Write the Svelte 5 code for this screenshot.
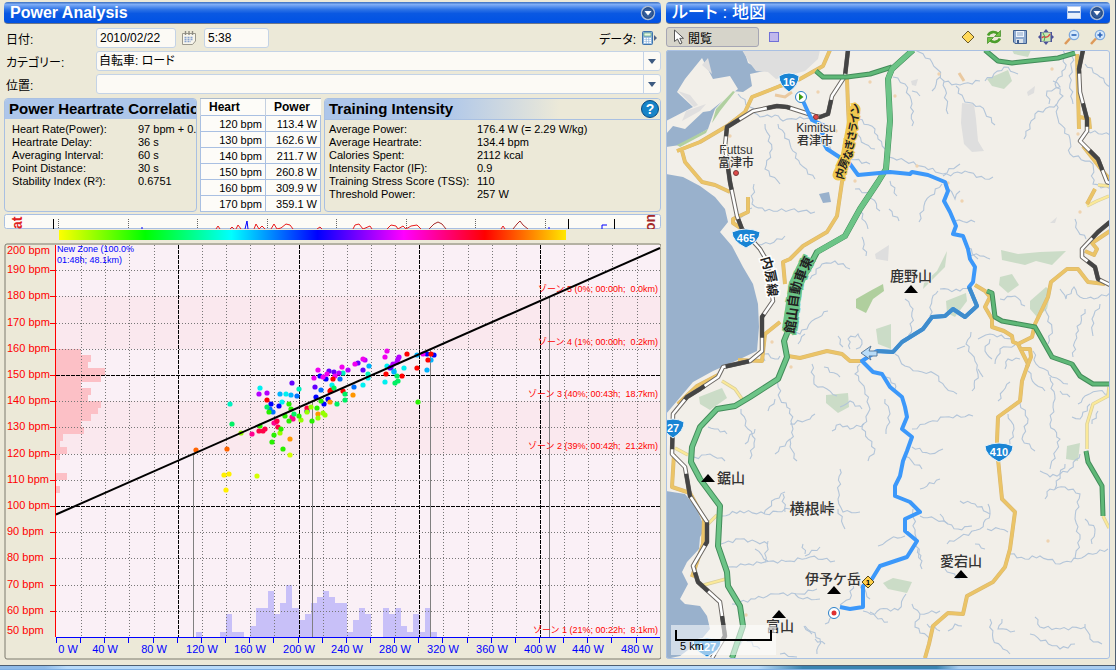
<script>
    let date = $state('2010/02/22');
    let time = $state('5:38');

    const correlation = [
        ['Heart Rate(Power):', '97 bpm + 0.2'],
        ['Heartrate Delay:', '36 s'],
        ['Averaging Interval:', '60 s'],
        ['Point Distance:', '30 s'],
        ['Stability Index (R²):', '0.6751']
    ];

    const intensity = [
        ['Average Power:', '176.4 W (= 2.29 W/kg)'],
        ['Average Heartrate:', '134.4 bpm'],
        ['Calories Spent:', '2112 kcal'],
        ['Intensity Factor (IF):', '0.9'],
        ['Training Stress Score (TSS):', '110'],
        ['Threshold Power:', '257 W']
    ];

    const heartPower = [
        [120, '113.4'], [130, '162.6'], [140, '211.7'],
        [150, '260.8'], [160, '309.9'], [170, '359.1']
    ];

    // chart scales
    const px = (w) => Math.round(57 + w * 1.2075);
    const py = (b) => Math.round(506 - (b - 100) * 2.62);
    const range = (from, to, step) => {
        const out = [];
        for (let i = from; i <= to; i += step) out.push(i);
        return out;
    };

    const bpmTicks = range(60, 190, 10);
    const wattTicks = range(0, 480, 20);
    const wattLabels = range(40, 480, 40);
    const stripTicks = [58, 128, 197, 267, 336, 406, 475, 545];

    const bpmBars = [25, 35, 32, 49, 45, 25, 35, 32, 45, 42, 35, 25, 28, 7, 4, 11, 4, 0, 0, 11, 0, 4];
    // one bar per 5 W, first one at 115 W
    const wattBars = [
        5, 0, 0, 0, 5, 23, 5, 5, 0, 11, 29, 29, 46, 23, 34, 52, 29, 17, 23, 34,
        40, 46, 40, 34, 34, 5, 17, 29, 23, 0, 0, 29, 23, 29, 11, 5, 23, 5, 29, 5
    ];

    const zones = [
        ['ゾーン 5 (0%; 00:00h;\u00a0 0.0km)', 292],
        ['ゾーン 4 (1%; 00:00h;\u00a0 0.2km)', 345],
        ['ゾーン 3 (40%; 00:43h;\u00a0 18.7km)', 397],
        ['ゾーン 2 (39%; 00:42h;\u00a0 21.2km)', 449],
        ['ゾーン 1 (21%; 00:22h;\u00a0 8.1km)', 633]
    ];

    const dots = {
        '#00f0f0': [[260,388],[286,394],[282,402],[332,385],[404,368],[387,366],[385,382],[368,378],[363,385]],
        '#00f0c0': [[230,404],[299,389],[368,374],[343,373],[394,371]],
        '#00b4ff': [[280,394],[291,395],[417,355],[431,360],[427,370],[369,366],[394,372]],
        '#0070ff': [[270,409],[273,412],[297,396],[321,390],[354,387],[340,379]],
        '#0000ff': [[271,404],[279,406],[316,397],[320,376],[326,379],[328,399],[324,404],[427,354],[434,355],[307,411]],
        '#6400ff': [[292,383],[315,387],[329,371],[334,372],[390,368],[358,363],[363,370],[391,367]],
        '#b400ff': [[259,394],[267,393],[398,359],[397,362],[393,364],[365,360],[348,370],[339,373],[399,357]],
        '#f000f0': [[318,370],[314,378],[323,377],[327,374],[335,376],[387,351],[385,357],[423,354],[363,359],[355,364],[342,367]],
        '#ff0090': [[274,423],[293,419],[292,417],[252,434],[276,422]],
        '#ff0048': [[277,421],[278,427],[265,429],[259,431],[263,431],[307,408]],
        '#ff0000': [[267,400],[333,379],[330,391],[407,354],[431,354],[428,360],[417,368],[402,376],[386,374],[343,391],[331,390]],
        '#ff6400': [[196,450],[227,449]],
        '#ff9600': [[290,439],[330,402],[318,414],[353,395]],
        '#fff000': [[224,475],[229,474],[226,490]],
        '#d2ff00': [[257,476],[290,455]],
        '#96ff00': [[301,420],[280,433],[241,433],[311,407],[323,413],[325,415],[318,418],[307,412]],
        '#28f000': [[269,412],[289,404],[291,409],[299,416],[285,416],[289,421],[281,429],[274,435],[260,426],[272,442],[283,449],[312,421],[317,408],[418,402],[321,401]],
        '#00f064': [[232,424],[267,407],[334,388],[337,404],[397,376],[398,381],[395,383],[345,394],[345,400],[294,414]]
    };

    // map layers
    const rail = [
        'M848,51L845,77 832,97 828,115 820,118 815,117 787,108 777,107 753,112 727,128 725,147 730,183 737,217 742,230 760,250 767,262 773,302 762,318 762,352 750,362 723,368 718,378 700,390 687,398 673,415 672,455 685,468 690,497 707,523 707,543 693,567 698,583 720,603 725,637 712,659',
        'M1083,51L1079,70 1080,93 1087,120 1087,132 1080,142 1098,160 1107,183 1110,184',
        'M1110,223L1098,233 1082,250 1082,258 1095,268 1098,280 1110,286'
    ];
    const orange = [
        'M830,51L823,67 800,80 780,87 770,91 752,98 745,113 727,127 700,143 677,152',
        'M682,152L685,163 702,183 715,186 730,193',
        'M847,80L848,107 850,150 842,183 837,217 827,233 803,247 790,260 783,263 785,285',
        'M748,198L748,213 733,220 733,224 742,230',
        'M788,357L800,359 827,352 842,355 850,362 862,362',
        'M780,323L765,335 762,362 738,361M718,376L697,387 678,405 M674,455L672,488 690,494 704,520 703,545 692,578',
        'M975,286L985,292 990,298 985,308 992,320 992,328 1004,332 1012,337 1013,343 1018,345 1028,365 1022,382 1020,402 998,418 997,442 998,460 1002,500 1015,513 1010,550 1005,568 993,583 967,597 963,615 948,614 933,627 929,645 925,659',
        'M1018,345L1032,338 1035,325 1048,298 1051,283 1067,270 1078,270 1088,283 1105,285',
        'M1020,350L1030,350 1031,358 1027,368',
        'M1077,55L1079,130M1080,118L1089,120 1090,130M1083,147L1105,175 1110,180M1095,190L1087,205',
        'M1110,232L1092,244 1097,250 1094,256 1085,252'
    ];
    const yellow = [
        'M1087,207L1097,202 1109,197M1098,186L1110,187',
        'M1109,388L1108,397 1093,405 1087,425 1087,450M1103,517L1109,529',
        'M722,382L735,390 742,400M675,449L688,456M717,516L707,526M700,587L726,580'
    ];
    const green = [
        'M913,51L892,70 888,80 890,122 886,170 878,183 860,210 845,237 817,253 807,272 793,292 788,332 784,342 787,358 778,380 750,398 735,407 717,410 700,428 692,448 691,463 700,480 720,507 718,547 727,573 728,587 740,607 743,627 732,659'
    ];
    const thinGreen = [
        'M816,72L823,78 847,78 870,75 892,68',
        'M985,51L998,62 1012,64 1058,59 1075,54',
        'M987,292L992,294 995,318 1002,322 1035,328 1052,358 1072,365 1080,377 1093,385 1110,385',
        'M1086,452L1088,463 1102,487 1103,517'
    ];
    const route = 'M803,102L808,113 812,121 827,128 820,138 827,150 850,165 858,176 890,173 910,175 912,173 928,176 945,183 948,192 944,202 950,213 956,227 953,235 963,237 968,250 970,260 975,268 973,283 969,288 977,307 965,318 953,310 945,317 932,318 923,330 902,343 893,353 877,352 862,362 873,373 882,375 890,388 902,398 905,408 907,418 902,430 912,438 907,452 903,462 900,477 895,487 895,497 910,503 920,513 905,520 905,532 917,542 907,558 880,567 872,580 863,587 863,608 850,610 840,608';
    const parks = [
        '987,80 1008,71 1012,82 1004,90 992,87', '1012,51 1031,51 1028,58 1014,55',
        '856,300 870,292 883,285 884,292 873,300 866,314 856,309', '876,330 891,325 891,350 878,345',
        '1001,251 1018,255 1040,253 1066,252 1052,266 1036,262 1025,266 1002,261', '946,302 966,294 967,302 955,318 947,314',
        '1000,278 1012,275 1019,286 1008,294 999,286', '1030,302 1046,288 1051,292 1047,310 1037,318 1030,310',
        '699,398 722,389 727,399 710,411 700,405', '826,396 848,394 849,408 838,414 826,404',
        '883,584 893,579 912,583 907,594 888,590', '1067,447 1080,444 1078,462 1066,460', '923,290 945,268 947,252 937,272 924,284'
    ];
    const towns = [
        '742,51 820,51 818,60 805,72 776,80 768,73 756,72 749,63', '962,104 974,105 976,120 978,142 984,152 972,153 964,145 961,124',
        '1027,93 1035,87 1034,94 1028,97', '911,82 918,80 916,87 912,86', '875,255 889,246 888,262 876,260', '1050,224 1057,218 1055,224'
    ];
    const hamlets = [[730,137],[818,93],[855,182],[772,343],[939,75],[895,97],[917,167],[948,184],[962,202],[1078,135],[1080,213],[1052,70],[870,83],[746,616],[1048,542],[791,368],[836,132]];

    const rivers = [
        [738,95,750,108,760,118,775,116,783,122,800,118,812,120], [765,125,772,150,765,170,780,185], [778,125,790,145,800,165,815,180],
        [754,185,752,205,765,212,790,211,815,213], [738,220,752,209], [749,245,770,245,785,237], [858,120,875,130,878,140,885,150],
        [848,125,865,145,875,150], [820,140,835,155,870,165], [855,190,870,195,880,212], [860,212,868,230], [810,280,822,265,835,262,850,270],
        [915,51,930,60,937,70,944,82,948,115], [944,83,960,86,980,82], [956,87,965,103,980,107,995,126], [893,78,905,85,912,105,912,127],
        [912,92,920,97], [932,92,940,78], [985,82,1004,68,1018,75], [1063,51,1065,70,1055,85,1063,97,1057,105,1035,115,1024,140],
        [1056,105,1058,120,1070,140], [1049,105,1047,92,1060,88,1053,82], [1085,65,1100,78,1110,88], [1070,140,1070,155,1093,165,1093,185,1110,190],
        [1073,53,1070,85,1073,105], [1087,132,1110,136], [889,158,905,162,925,168,943,175,960,165], [943,177,965,172,985,180,993,178],
        [942,185,925,203,919,223], [949,190,955,200,960,192], [955,222,975,223], [965,245,978,260], [968,255,980,257,990,260],
        [862,238,866,257], [1075,220,1078,232,1086,240], [890,182,897,197], [889,210,899,222],
        [1060,290,1066,300,1074,288,1080,298,1094,300,1110,294], [1045,310,1052,330,1048,345], [1085,310,1076,335,1073,358],
        [1100,305,1092,320,1093,337], [930,317,932,300,938,292], [910,340,913,310,905,300], [895,355,905,367,918,372,935,375,945,388,957,395],
        [1000,300,1015,297,1025,307], [940,290,960,292,970,288], [1012,340,990,335,978,340], [1015,346,1000,350,995,365],
        [971,333,966,345,975,362,978,375,972,392], [978,370,983,378], [990,340,985,352,992,360], [965,347,957,350], [1020,360,1008,360,1005,370],
        [1033,352,1036,365,1048,372,1052,378,1068,385], [1050,378,1055,400,1050,425,1060,440,1050,470], [1028,372,1035,385,1045,392],
        [1010,383,1003,392,998,402], [1020,404,1028,420,1022,440,1035,452], [1008,415,1014,430,1010,445],
        [1109,395,1098,392,1085,397,1078,405], [1090,405,1080,420,1072,418], [1098,412,1092,425], [1080,455,1070,470,1060,475],
        [1040,472,1050,478,1060,475], [1060,392,1070,398], [886,378,895,385,895,390], [912,430,925,425,945,418,973,417],
        [885,400,890,415,886,435], [912,448,930,455,943,450], [905,457,922,470], [860,365,855,375,864,387,870,410,862,430,875,450,868,462],
        [812,365,814,385,827,390,837,397], [824,368,840,378], [788,330,800,335,815,320,828,312], [798,345,805,335], [850,350,848,340,858,335,862,345,856,350],
        [843,348,838,337], [778,380,780,400,790,410,793,430,790,448,797,462], [741,410,748,430,755,440,750,460], [755,430,745,445],
        [690,460,710,455,725,462], [708,428,718,430,727,435], [790,425,810,420,815,415], [775,400,768,412], [790,440,775,455],
        [862,410,850,402,840,408], [864,425,850,430,840,425,832,432], [765,362,760,352,775,360,780,357], [722,517,740,512,765,515,790,510,830,512],
        [764,515,775,500,785,493], [785,513,783,495], [840,470,838,500,843,513,860,513], [838,510,845,530], [721,545,740,540,768,545],
        [728,568,745,566,765,563,768,542], [755,550,768,562], [765,563,790,562,810,558,835,562], [805,557,820,548], [732,605,755,600,775,595,800,595,817,590],
        [795,595,803,600,820,600], [805,555,803,545], [878,547,890,540,905,537], [920,517,935,520,948,525,958,530,972,527], [948,525,940,515],
        [947,545,960,538,980,530,990,515,988,505], [990,515,975,505,960,502], [987,530,1000,530,1008,533], [960,580,945,570], [985,550,975,545],
        [920,490,940,480], [1045,500,1050,490,1065,488,1080,495,1075,520,1080,540,1075,560], [1010,555,1025,560,1040,557,1060,565,1085,557,1108,550],
        [1085,520,1095,530,1092,545], [1065,465,1060,475,1055,490], [913,510,915,535,922,570], [920,560,918,550], [805,627,820,640,817,655],
        [815,640,825,645], [804,627,812,635], [863,612,875,615,880,610,898,611,906,595], [870,613,878,620,888,623], [825,625,835,615],
        [912,605,920,615,940,612], [920,615,915,628,930,640], [927,625,940,632], [990,620,993,640,1003,650,1010,655],
        [1002,620,998,630,1015,632], [1035,618,1040,628,1060,630,1085,628], [1085,625,1090,640,1102,645], [1030,635,1060,650,1075,645],
        [733,650,745,640,760,650], [948,632,955,625,962,627], [860,585,870,600], [853,585,850,600,840,606], [780,655,797,658]
    ];

    // breaks every stretch into short crooked pieces
    function crooked(p) {
        let d = `M${p[0]},${p[1]}`;
        for (let i = 2; i < p.length; i += 2) {
            const dx = p[i] - p[i - 2];
            const dy = p[i + 1] - p[i - 1];
            const len = Math.hypot(dx, dy);
            const n = Math.max(2, Math.round(len / 4));
            for (let k = 1; k < n; k++) {
                const off = Math.sin(k * 2.3 + p[i] * 1.7 + p[i + 1]) * 1.6;
                const x = p[i - 2] + (dx * k) / n - (dy / len) * off;
                const y = p[i - 1] + (dy * k) / n + (dx / len) * off;
                d += `L${x.toFixed(1)},${y.toFixed(1)}`;
            }
            d += `L${p[i]},${p[i + 1]}`;
        }
        return d;
    }

    const shields = [['16', 789, 83, 10], ['465', 746, 239, 14], ['410', 999, 453, 14], ['27', 673, 429, 11], ['127', 707, 648, 14]];
    const peaks = [[911, 290], [708, 479], [834, 591], [961, 575], [779, 615]];
    const places = [
        ['Kimitsu', 816, 133, 12], ['君津市', 815, 146, 12], ['Futtsu', 736, 155, 12], ['富津市', 736, 168, 12],
        ['鹿野山', 911, 282, 14], ['鋸山', 731, 484, 14], ['横根峠', 812, 515, 15], ['伊予ケ岳', 833, 585, 14],
        ['愛宕山', 961, 567, 14], ['富山', 780, 632, 14]
    ];
</script>

{#snippet menuButton(label)}
    <button class="round" aria-label={label}>
        <svg width="16" height="16" viewBox="0 0 16 16">
            <circle cx="8" cy="8" r="6.5" fill="#315c9c" stroke="#a9bad2" stroke-width="1.5" />
            <circle cx="8" cy="8" r="5.2" fill="none" stroke="#244a82" />
            <path d="M4.5,6H11.5L8,10.5Z" fill="#fff" />
        </svg>
    </button>
{/snippet}

<div class="app">
    <main>
        <section class="analysis">
            <header class="title">
                <h1>Power Analysis</h1>
                {@render menuButton('Panel menu')}
            </header>

            <form>
                <label for="date">日付:</label>
                <div class="line">
                    <input id="date" class="date" type="text" bind:value={date} />
                    <button type="button" aria-label="Calendar">
                        <svg width="16" height="16" viewBox="0 0 16 16">
                            <path d="M1.5,3.5H14.5V11L11.5,14.5H1.5Z" fill="#f7f5ec" stroke="#9a988d" />
                            <path d="M4.5,1V5M8,1V5M11.5,1V5" stroke="#8d8b82" stroke-width="1.4" />
                            <path d="M3.5,7.5H12.5M3.5,9.5H12.5M3.5,11.5H10" stroke="#89a3cf" stroke-width="1.4" stroke-dasharray="2 1" />
                        </svg>
                    </button>
                    <input class="time" type="text" aria-label="Time" bind:value={time} />
                    <span class="data">データ:</span>
                    <button type="button" aria-label="データ">
                        <svg width="17" height="16" viewBox="0 0 17 16">
                            <rect x="1.5" y="1.5" width="10" height="13" rx="1" fill="#8db4dc" stroke="#3e74ad" />
                            <rect x="3" y="3" width="7" height="3" fill="#e9f8e0" stroke="#4a9a74" stroke-width=".6" />
                            <path d="M3,8.5H10M3,10.5H10M3,12.5H10" stroke="#fff" stroke-width="1.3" stroke-dasharray="1.8 .8" />
                            <path d="M13,5V11L16,8Z" fill="#4d6285" />
                        </svg>
                    </button>
                </div>

                <label for="category">カテゴリー:</label>
                <select id="category"><option>自転車: ロード</option></select>

                <label for="location">位置:</label>
                <select id="location"><option></option></select>
            </form>

            <div class="panels">
                <div class="panel">
                    <h2>Power Heartrate Correlation</h2>
                    <dl class="correlation">
                        {#each correlation as [name, value]}
                            <dt>{name}</dt><dd>{value}</dd>
                        {/each}
                    </dl>
                </div>
                <table>
                    <thead>
                        <tr><th>Heart</th><th>Power</th></tr>
                    </thead>
                    <tbody>
                        {#each heartPower as [bpm, watts]}
                            <tr><td>{bpm} bpm</td><td>{watts} W</td></tr>
                        {/each}
                    </tbody>
                </table>
                <div class="panel">
                    <h2 class="fade">Training Intensity</h2>
                    <button class="help" aria-label="Help">?</button>
                    <dl class="intensity">
                        {#each intensity as [name, value]}
                            <dt>{name}</dt><dd>{value}</dd>
                        {/each}
                    </dl>
                </div>
            </div>

            <svg class="chart" viewBox="4 214 657 446">
                <defs>
                    <linearGradient id="time">
                        <stop offset="0" stop-color="#ff0" />
                        <stop offset=".17" stop-color="#0f0" />
                        <stop offset=".34" stop-color="#0ff" />
                        <stop offset=".51" stop-color="#00f" />
                        <stop offset=".68" stop-color="#f0f" />
                        <stop offset=".84" stop-color="#f00" />
                        <stop offset="1" stop-color="#ffe800" />
                    </linearGradient>
                    <clipPath id="strip"><rect x="5" y="215" width="655" height="14" /></clipPath>
                </defs>

                <!-- overview strip -->
                <rect x="4.5" y="214.5" width="656" height="14" rx="2" fill="#fcfbf6" stroke="#a9c0e2" />
                <g clip-path="url(#strip)">
                    <text class="turned" transform="translate(22 229) rotate(-90)" fill="#e02020">at</text>
                    <text class="turned" transform="translate(655 231) rotate(-90)" fill="#a52a2a">on</text>
                    {#each stripTicks as x}
                        <path d="M{x + .5},219V229" stroke="#666" stroke-dasharray="1 1" />
                    {/each}
                    <path d="M53.5,219V229M568.5,219V229M614.5,219V229" stroke="#000" />
                    <path d="M216,229L218,226 220,229M230,229L232,227 234,229M236,229L238,225 241,229M254,229L256,224 259,229 262,226 265,229M271,229L274,224 277,229 281,228 286,224 290,225 293,229M317,229L320,227 322,229M353,229L355,225 359,224 363,229 370,226 372,229M387,229L391,225 396,226 398,229 403,226 406,229 411,226 417,225 421,229M501,229L503,226 505,229" fill="none" stroke="#e81c1c" />
                    <path d="M429,229L434,224 438,222 442,224 446,229M513,229L517,224 520,221 523,225 528,229" fill="none" stroke="#a52a2a" />
                    <path d="M245,229L247,221 248,229M142,229V227M549,229V227M602,229V225H607" fill="none" stroke="#00f" />
                </g>
                <rect x="59" y="230" width="507" height="10" fill="url(#time)" />

                <!-- frame and zones -->
                <rect x="5" y="244" width="656" height="415" rx="2" fill="#ece9d8" stroke="#7d7a6e" />
                <rect x="56" y="245" width="604" height="392" fill="#faf0f6" />
                <rect x="56" y="296" width="604" height="53" fill="#fae8ee" />
                <rect x="56" y="401" width="604" height="53" fill="#fae8ee" />

                {#each bpmBars as w, i}
                    <rect x="56" y={py(160 - i * 2.5)} width={w} height={py(157.5 - i * 2.5) - py(160 - i * 2.5)} fill="#fcc0c6" />
                {/each}
                {#each wattBars as h, i}
                    <rect x={px(115 + i * 5)} y={637 - h} width={px(120 + i * 5) - px(115 + i * 5)} height={h} fill="#c8c0f8" />
                {/each}

                {#each wattTicks.slice(1) as w}
                    <path class={w % 100 ? 'minor' : 'major'} d="M{px(w) + .5},245V637" />
                {/each}
                {#each bpmTicks as b}
                    <path class={b % 50 ? 'minor' : 'major'} d="M56,{py(b) + .5}H660" />
                {/each}
                <path d="M193.5,454V637M312.5,401V637M430.5,349V637M549.5,296V637" stroke="#808080" />

                {#each zones as [name, y]}
                    <text class="zone" x="658" {y}>{name}</text>
                {/each}
                <text class="new" x="57" y="252">New Zone (100.0%</text>
                <text class="new" x="57" y="263">01:48h; 48.1km)</text>

                {#each Object.entries(dots) as [color, list]}
                    {#each list as [x, y]}
                        <circle cx={x} cy={y} r="2.6" fill={color} />
                    {/each}
                {/each}
                <path d="M56,514.500L660,248" stroke="#000" stroke-width="2" />

                <!-- axes -->
                <path d="M55.5,245V637" stroke="#f00" />
                {#each bpmTicks as b}
                    <path d="M50,{py(b) + .5}H55" stroke="#f00" />
                    <text class="bpm" x="7" y={py(b) + 3}>{b} bpm</text>
                {/each}
                <text class="bpm" x="7" y="254">200 bpm</text>
                <text class="bpm" x="7" y="634">50 bpm</text>
                <path d="M56,637.5H660" stroke="#00f" />
                {#each wattTicks as w}
                    <path d="M{px(w) - .5},637V643" stroke="#00f" />
                {/each}
                <text class="watt" x="68" y="653">0 W</text>
                {#each wattLabels as w}
                    <text class="watt" x={px(w)} y="653">{w} W</text>
                {/each}
            </svg>
        </section>

        <section class="route">
            <header class="title">
                <h1 class="jp">ルート : 地図</h1>
                <button class="split" aria-label="Split view"></button>
                {@render menuButton('Panel menu')}
            </header>

            <div class="tools">
                <button class="browse">
                    <svg width="12" height="16" viewBox="0 0 12 16">
                        <path d="M1.500,1V12.500L4.500,10 7,15 9,14 6.800,9.300H10.500Z" fill="#fff" stroke="#555" />
                    </svg>
                    閲覧
                </button>
                <button class="area" aria-label="Select area"></button>
                <span class="gap"></span>
                <button aria-label="Waypoint">
                    <svg width="16" height="16" viewBox="0 0 16 16"><path d="M8,2L14,8 8,14 2,8Z" fill="#ffd95a" stroke="#6b5a2a" /></svg>
                </button>
                <button aria-label="Refresh">
                    <svg width="16" height="16" viewBox="0 0 16 16" fill="none" stroke="#4c9e2c" stroke-width="2.600">
                        <path d="M2,6.500C4,2.500 9,2 12,5" />
                        <path d="M14,9.500C12,13.500 7,14 4,11" />
                        <path d="M14.500,1.500V7.500H8.500ZM1.500,14.500V8.500H7.500Z" fill="#6ec043" stroke="#3c8a22" stroke-width=".7" />
                    </svg>
                </button>
                <button aria-label="Save">
                    <svg width="16" height="16" viewBox="0 0 16 16">
                        <path d="M1.500,1.500H14.500V14.500H3L1.500,13Z" fill="#8fabd0" stroke="#3f5f8f" />
                        <rect x="4" y="2" width="8" height="6" fill="#eef4fb" />
                        <path d="M5,4H11M5,6H11" stroke="#8ba6c8" />
                        <rect x="4" y="10" width="7" height="4" fill="#dce3ea" />
                        <rect x="5" y="11" width="2" height="3" fill="#3f5f8f" />
                    </svg>
                </button>
                <button aria-label="Fit route">
                    <svg width="16" height="16" viewBox="0 0 16 16">
                        <path d="M8,0L10.500,3H14V6L16,8 14,10V13H10.500L8,16 5.500,13H2V10L0,8 2,6V3H5.500Z" fill="#4c5299" />
                        <rect x="3.500" y="3.500" width="9" height="9" fill="#c8e8b0" />
                        <path d="M4,9C6,5 8,12 12,5" fill="none" stroke="#e04848" stroke-width="1.500" />
                        <path d="M5,4L7,8 6,12" fill="none" stroke="#4aa050" />
                    </svg>
                </button>
                {#each ['Zoom out', 'Zoom in'] as label, i}
                    <button aria-label={label}>
                        <svg width="16" height="16" viewBox="0 0 16 16">
                            <path d="M1,15L6,9.500" stroke="#dd9a5a" stroke-width="2.500" />
                            <circle cx="10" cy="6" r="4.700" fill="#d6e9fb" stroke="#7fa9dc" stroke-width="1.300" />
                            <path d={i ? 'M7.500,6H12.500M10,3.500V8.500' : 'M7.500,6H12.500'} stroke="#2a62b8" stroke-width="1.600" />
                        </svg>
                    </button>
                {/each}
            </div>

            <svg class="map" viewBox="666 51 444 609">
                <rect x="666" y="50" width="445" height="611" fill="#f2efe9" />
                <g fill="#99b1cc">
                    <path d="M666,51H744L748,64 764,72 750,75 752,87 743,93 732,92 715,110 708,130 680,146 666,148Z" />
                    <path d="M666,175L683,178 700,187 715,198 725,210 728,223 720,233 732,247 743,268 753,285 758,305 759,328 757,352 740,360 713,372 693,383 677,402 666,415Z" />
                    <path d="M666,492L685,495 697,510 705,530 700,538 699,550 687,563 682,573 688,585 680,600 685,605 700,607 707,617 710,630 700,642 680,657 666,660Z" />
                    <path d="M819,195L829,193 831,203 823,204Z" />
                </g>
                <path d="M702,59L713,80 730,77 738,90 710,112 703,113 685,130 673,127 666,135V122L693,108 677,93 685,80Z" fill="#f2efe9" />
                <path d="M708,59L712,75 702,66ZM678,92L690,96 698,106 694,108ZM686,112L706,105 700,112 682,122Z" fill="#e0dfdf" />
                {#each towns as points}
                    <polygon {points} fill="#dedede" />
                {/each}
                <path d="M733,92L716,110 712,124 720,112 735,93ZM677,146L708,130 706,134 680,148Z" fill="#b0d0a0" />
                {#each parks as points, i}
                    <polygon {points} fill={i === 2 ? '#b0cf9e' : '#cbdcc7'} />
                {/each}
                {#each rivers as points}
                    <path d={crooked(points)} fill="none" stroke="#b3c5d9" stroke-width="1.1" />
                {/each}
                {#each hamlets as [x, y]}
                    <circle cx={x} cy={y} r="1.7" fill="#efd3b0" />
                {/each}
                <path d="M775,96L785,98 792,93M959,74L964,82" fill="none" stroke="#eac9a0" stroke-width="3" />

                <g fill="none" stroke-linejoin="round">
                    {#each yellow as d}
                        <path {d} stroke="#d9cf9c" stroke-width="3.5" /><path {d} stroke="#fbe998" stroke-width="2" />
                    {/each}
                    {#each orange as d}
                        <path {d} stroke="#d8b772" stroke-width="4" /><path {d} stroke="#ebc467" stroke-width="3" />
                    {/each}
                    {#each rail as d}
                        <path {d} stroke="#6c6864" stroke-width="4.5" /><path {d} stroke="#fff" stroke-width="2.500" />
                        <path {d} stroke="#444" stroke-width="4" stroke-dasharray="24 30" />
                    {/each}
                    {#each thinGreen as d}
                        <path {d} stroke="#438c5a" stroke-width="5" /><path {d} stroke="#5fb877" stroke-width="3" />
                    {/each}
                    {#each green as d}
                        <path {d} stroke="#438c5a" stroke-width="6" /><path {d} stroke="#6cc487" stroke-width="4" />
                    {/each}
                    <path d="M913,51L892,70 888,80 890,122 886,170 878,183 860,210 845,237 817,253" stroke="#6cc487" stroke-width="5" />
                    <path d={route} stroke="#3c98fa" stroke-width="4" />
                    <path d="M969,288L977,307 965,318 953,310 945,317 932,318 923,330 902,343 893,353 877,352" stroke="#3f8ccc" stroke-width="4" />
                </g>

                {#each shields as [label, x, y, w]}
                    <g transform="translate({x} {y})">
                        <path d="M{-w},-6Q0,-12 {w},-6Q{w},3 0,10Q{-w},3 {-w},-6Z" fill="#1984d4" stroke="#e8f2f8" />
                        <text class="shield" y="4">{label}</text>
                    </g>
                {/each}

                <g class="road" stroke="#f0c850">
                    <path d="M838,176L846,158 855,110" fill="none" stroke-width="11" stroke-linecap="round" />
                    {#each [['内', 843, 181, -75], ['房', 845, 171, -65], ['な', 850, 162, -70], ['ぎ', 852, 152, -75], ['さ', 854, 143, -75], ['ラ', 856, 134, -78], ['イ', 857, 125, -78], ['ン', 858, 116, -78]] as [c, x, y, a]}
                        <text transform="translate({x} {y}) rotate({a})">{c}</text>
                    {/each}
                </g>
                <g class="road wide" stroke="#6cc487">
                    <path d="M807,262L796,285 789,330" fill="none" stroke-width="14" />
                    {#each [['館', 794, 335, -80], ['山', 796, 322, -82], ['自', 797, 309, -82], ['動', 799, 296, -78], ['車', 803, 284, -70], ['東', 808, 272, -65]] as [c, x, y, a]}
                        <text transform="translate({x} {y}) rotate({a})">{c}</text>
                    {/each}
                </g>
                <g class="road wide" stroke="#fff">
                    {#each [['内', 761, 259, 74], ['房', 765, 272, 78], ['線', 767, 285, 84]] as [c, x, y, a]}
                        <text transform="translate({x} {y}) rotate({a})">{c}</text>
                    {/each}
                </g>

                <circle cx="736" cy="174" r="2.500" fill="#e04848" stroke="#7a3a3a" />
                <circle cx="816" cy="118" r="2.500" fill="#e04848" stroke="#7a3a3a" />
                {#each places as [name, x, y, size]}
                    <text class="place" {x} {y} font-size={size}>{name}</text>
                {/each}
                {#each peaks as [x, y]}
                    <path d="M{x - 7},{y + 4}L{x},{y - 4} {x + 7},{y + 4}Z" />
                {/each}

                <circle cx="801" cy="98" r="5.500" fill="#fff" stroke="#2a7fc8" />
                <path d="M799,94.500V101.500L803.500,98Z" fill="#3c9a10" />
                <circle cx="834" cy="614" r="5.500" fill="#fff" stroke="#2a7fc8" />
                <circle cx="834" cy="614" r="2.500" fill="#e03030" />
                <path d="M861,354L871,347 869,352H877V357H869L871,361Z" fill="#b8dcf8" stroke="#5c7c9c" />
                <path d="M868,577L874,583 868,589 862,583Z" fill="#ffd04a" stroke="#5a4a1a" />
                <text class="mark" x="868" y="586">1</text>

                <rect x="671" y="626" width="105" height="30" fill="#fff" opacity=".55" />
                <path d="M676,631V641H771V631" fill="none" stroke="#000" stroke-width="2" />
                <text class="scale" x="680" y="651">5 km</text>
            </svg>
        </section>
    </main>
    <footer></footer>
</div>

<style>
    :global(body) {
        background: #ece9d8;
        margin: 0;
    }

    .app {
        min-height: 100vh;
        box-sizing: border-box;
        display: flex;
        flex-direction: column;
        border-right: 1px solid #4e5f72;
        background: #ece9d8;
        font-family: 'Liberation Sans', 'Noto Sans CJK JP', sans-serif;
        font-size: 11px;
        color: #000;
    }

    main {
        flex: 1;
        display: grid;
        grid-template-columns: minmax(0, 657fr) minmax(0, 444fr);
        gap: 5px;
        padding: 2px 5px 5px 4px;
        align-items: start;
    }

    button {
        border: 0;
        padding: 0;
        background: none;
        font: inherit;
        color: inherit;
        display: flex;
        align-items: center;
    }

    .title {
        display: flex;
        align-items: center;
        gap: 8px;
        height: 22px;
        box-sizing: border-box;
        padding: 0 5px 0 6px;
        border-radius: 4px;
        border-bottom: 1px solid #6f7787;
        background: linear-gradient(#3b6fc0, #7eadf6 12%, #2f74e6 35%, #0a58e2 55%, #0052e4);
    }

    .title h1 {
        flex: 1;
        margin: 0;
        color: #fff;
        font-size: 16px;
        line-height: 20px;
    }

    .title .jp {
        font-size: 17px;
        font-weight: 500;
        font-feature-settings: 'palt';
    }

    .split {
        width: 14px;
        height: 13px;
        border: 1px solid #b9cdf0;
        background: linear-gradient(#fff 40%, #5c86c8 40%, #5c86c8 55%, #e8f0fc 55%);
    }

    form {
        display: grid;
        grid-template-columns: 92px minmax(0, 1fr);
        grid-auto-rows: 20px;
        row-gap: 3px;
        align-items: center;
        padding: 4px 0;
        font-size: 12px;
        font-feature-settings: 'palt';
    }

    label {
        padding-left: 2px;
    }

    .line {
        display: flex;
        align-items: center;
        gap: 5px;
    }

    input,
    select {
        box-sizing: border-box;
        height: 20px;
        border: 1px solid #c4d3e6;
        border-radius: 3px;
        background-color: #fcfaf5;
        font: inherit;
        font-feature-settings: inherit;
        color: #000;
        padding: 0 3px;
        margin: 0;
    }

    .date {
        width: 80px;
    }

    .time {
        width: 65px;
        margin-left: 2px;
    }

    .data {
        margin-left: auto;
    }

    .line button:last-child {
        margin-right: 3px;
    }

    select {
        appearance: none;
        width: 100%;
        padding: 0 20px 0 2px;
        background-image: linear-gradient(#c4d3e6, #c4d3e6), url("data:image/svg+xml,%3Csvg xmlns='http://www.w3.org/2000/svg' width='8' height='5'%3E%3Cpath d='M0 0H8L4 5Z' fill='%233d5a80'/%3E%3C/svg%3E");
        background-repeat: no-repeat;
        background-size: 1px 100%, 8px 5px;
        background-position: right 16px top 0, right 4px center;
    }

    .panels {
        display: grid;
        grid-template-columns: minmax(0, 193fr) 121px minmax(0, 337fr);
        gap: 3px;
        margin-bottom: 2px;
    }

    .panel {
        position: relative;
        border: 1px solid #a9c0e2;
        border-radius: 4px;
        overflow: hidden;
    }

    h2 {
        margin: 0;
        padding: 0 4px;
        font-size: 15px;
        line-height: 20px;
        white-space: nowrap;
        background: #adc6ea;
    }

    .fade {
        background: linear-gradient(90deg, #adc6ea 35%, #ece9d8 70%);
        border-bottom: 1px solid #a9c0e2;
    }

    .help {
        position: absolute;
        top: 1px;
        right: 1px;
        width: 18px;
        height: 18px;
        justify-content: center;
        border: 1px solid #0a4a80;
        border-radius: 50%;
        background: #1784c8;
        color: #fff;
        font-size: 14px;
        font-weight: 700;
    }

    dl {
        display: grid;
        grid-auto-rows: 13px;
        line-height: 13px;
        margin: 0;
        padding: 3px 0 0 4px;
        white-space: nowrap;
    }

    dd {
        margin: 0;
    }

    .correlation {
        grid-template-columns: 126px 1fr;
        padding-left: 7px;
        padding-top: 4px;
    }

    .intensity {
        grid-template-columns: 148px 1fr;
    }

    table {
        border-collapse: collapse;
        table-layout: fixed;
        width: 100%;
        height: 114px;
        background: #fdfcf8;
    }

    th {
        height: 16px;
        padding: 0 8px;
        text-align: left;
        font-size: 12px;
        line-height: 14px;
        border-top: 1px solid #a9b9cc;
        border-left: 1px solid #c4d0e0;
    }

    td {
        height: 15px;
        padding: 0 3px;
        border: 1px solid #a9c0e2;
        text-align: right;
        line-height: 14px;
    }

    th:first-child {
        width: 48px;
    }

    .chart,
    .map {
        display: block;
        width: 100%;
    }

    .minor {
        stroke: #777;
        stroke-dasharray: 1 2;
    }

    .major {
        stroke: #000;
        stroke-dasharray: 4 1;
    }

    .turned {
        font-size: 14px;
        font-weight: 700;
    }

    .bpm {
        fill: #f00;
        font-size: 11px;
    }

    .watt {
        fill: #00f;
        font-size: 11px;
        text-anchor: middle;
    }

    .zone {
        fill: #f00;
        font-size: 9px;
        text-anchor: end;
    }

    .new {
        fill: #00f;
        font-size: 9px;
    }

    .tools {
        display: flex;
        align-items: center;
        gap: 10px;
        height: 20px;
        padding: 3px 4px 3px 0;
    }

    .browse {
        box-sizing: border-box;
        width: 93px;
        height: 20px;
        padding: 0 6px;
        gap: 3px;
        border: 1px solid #a6a6b4;
        border-radius: 3px;
        background: #d6d4ca;
        font-size: 12px;
    }

    .area {
        width: 10px;
        height: 10px;
        border: 1px solid #7070d8;
        background: #c0b8ec;
    }

    .gap {
        flex: 1;
    }

    .map {
        border-radius: 3px;
        outline: 1px solid #a9c0e2;
        outline-offset: -1px;
    }

    .shield {
        fill: #fff;
        font-size: 11px;
        font-weight: 700;
        text-anchor: middle;
    }

    .road text {
        font-size: 11px;
        font-weight: 700;
        fill: #222;
        stroke-width: 3px;
        paint-order: stroke;
    }

    .wide text {
        font-size: 13px;
    }

    .place {
        fill: #333;
        stroke: #f2efe9;
        stroke-width: 2px;
        paint-order: stroke;
        text-anchor: middle;
        font-weight: 500;
    }

    .mark {
        font-size: 8px;
        font-weight: 700;
        text-anchor: middle;
    }

    .scale {
        font-size: 11px;
    }

    footer {
        height: 3px;
        border-top: 1px solid #4e5f72;
        border-bottom: 1px solid #7fb0e4;
        background: linear-gradient(90deg, #8fbbe8 4%, #b8dbfa 6%, #b8dbfa 68%, #3b85b0 72%, #3b85b0 84%, #a8cdf0 86%);
    }
</style>
